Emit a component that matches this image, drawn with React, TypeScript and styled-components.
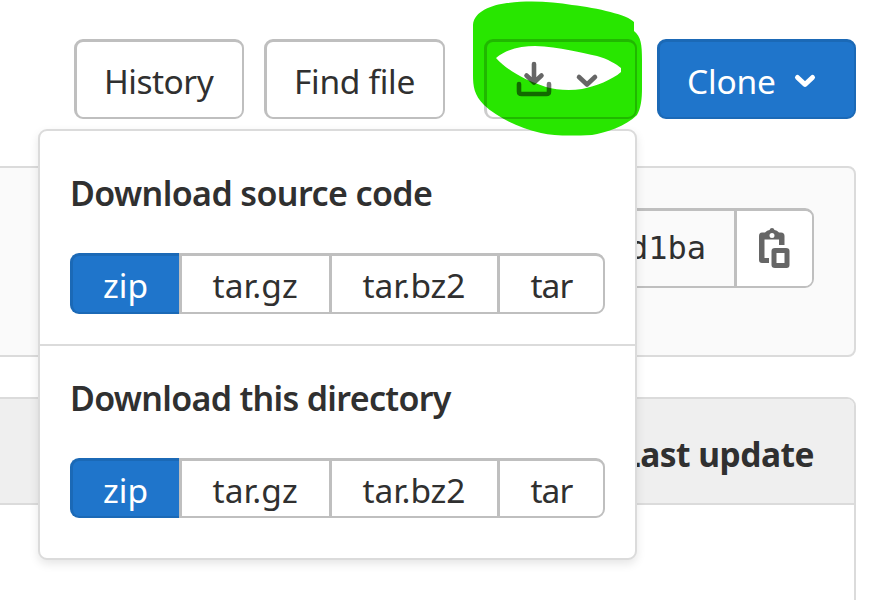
import React from "react";
import styled, { createGlobalStyle, css } from "styled-components";

const Global = createGlobalStyle`
  * { box-sizing: border-box; }
  body { margin: 0; background: #fff; overflow: hidden; }
`;

const Page = styled.main`
  position: relative;
  width: 895px;
  height: 600px;
  overflow: hidden;
  background: #fff;
  color: #303030;
  font-family: "Noto Sans", "Open Sans", sans-serif;
  font-size: 33.5px;
`;

const Toolbar = styled.header`
  display: flex;
  gap: 20px;
  padding: 39px 0 0 74px;
`;

const Label = styled.span<{ $track?: number }>`
  display: block;
  white-space: nowrap;
  line-height: 40px;
  letter-spacing: ${(p) => p.$track ?? 0}px;
`;

const Button = styled.button<{ $width: number; $primary?: boolean }>`
  display: flex;
  align-items: center;
  width: ${(p) => p.$width}px;
  height: 80px;
  padding: 3px 0 0 27px;
  border: solid #bfbfbf;
  border-width: 3px 2px 2px 3px;
  border-radius: 9px;
  background: #fff;
  color: inherit;
  font: inherit;
  ${(p) =>
    p.$primary &&
    css`
      border-color: #1b69b6;
      background: #1f75cb;
      color: #fff;
    `}
`;

const DownloadButton = styled(Button)`
  position: relative;
  z-index: 3;
  margin-left: 19px;
  padding: 0 0 1px 28px;
  gap: 22px;
  border-color: rgba(0, 0, 0, 0.2);
  background: transparent;
`;

const Icon = styled.svg`
  display: block;
  flex: none;
  fill: none;
  stroke: currentColor;
  stroke-linecap: round;
  stroke-linejoin: round;
`;

const DownloadChevron = styled(Icon)`
  margin-top: 3px;
`;

const CloneChevron = styled(Icon)`
  margin: 0 0 1px 17px;
`;

const CommitCard = styled.section`
  width: 876px;
  height: 191px;
  margin: 47px 0 0 -20px;
  padding: 40px 40px 0 0;
  border: 2px solid #dbdbdb;
  border-radius: 8px;
  background: #fafafa;
  display: flex;
  justify-content: flex-end;
`;

const ShaGroup = styled.div`
  display: flex;
  width: 260px;
  height: 80px;
  border: solid #bfbfbf;
  border-width: 3px 2px 2px 3px;
  border-radius: 9px;
  overflow: hidden;
`;

const Sha = styled.code`
  flex: 1;
  padding-right: 28px;
  text-align: right;
  font: 32px/74px "DejaVu Sans Mono", monospace;
`;

const CopyButton = styled.button`
  width: 78px;
  padding: 0 0 2px 22px;
  border: 0;
  border-left: 3px solid #bfbfbf;
  background: #fff;
  color: #666;
`;

const FileTable = styled.section`
  width: 876px;
  height: 240px;
  margin: 40px 0 0 -20px;
  border: 2px solid #dbdbdb;
  border-radius: 9px;
  overflow: hidden;
`;

const TableHead = styled.div`
  display: flex;
  justify-content: flex-end;
  align-items: center;
  height: 106px;
  padding: 5px 40px 0 0;
  border-bottom: 2px solid #dbdbdb;
  background: #efefef;
  font-weight: 700;
`;

const Menu = styled.div`
  position: absolute;
  z-index: 1;
  left: 38px;
  top: 129px;
  width: 599px;
  height: 431px;
  border: 2px solid #dbdbdb;
  border-radius: 9px;
  background: #fff;
  box-shadow: 0 4px 10px rgba(0, 0, 0, 0.1);
`;

const MenuSection = styled.section<{ $first?: boolean }>`
  height: ${(p) => (p.$first ? 215 : 212)}px;
  padding: ${(p) => (p.$first ? 42 : 32)}px 30px 0;
  ${(p) => p.$first && "border-bottom: 2px solid #dbdbdb;"}
`;

const Heading = styled.h2`
  margin: 0;
  font-size: 34px;
  font-weight: 600;
`;

const Formats = styled.div<{ $height: number }>`
  display: flex;
  width: 535px;
  height: ${(p) => p.$height}px;
  margin-top: 40px;
`;

const Format = styled.button<{ $width: number; $active?: boolean }>`
  width: ${(p) => p.$width}px;
  padding: 2px 0 0 30.5px;
  border: solid #bfbfbf;
  border-width: 3px 0 2px 3px;
  background: #fff;
  color: inherit;
  font: inherit;
  text-align: left;
  &:last-child {
    border-right-width: 2px;
    border-radius: 0 9px 9px 0;
  }
  ${(p) =>
    p.$active &&
    css`
      padding-left: 30px;
      border-color: #1b69b6;
      border-radius: 9px 0 0 9px;
      background: #1f75cb;
      color: #fff;
    `}
`;

const Highlight = styled.svg`
  position: absolute;
  z-index: 2;
  left: 465px;
  top: 0;
  pointer-events: none;
`;

const formats = [
  { name: "zip", width: 109, track: 0 },
  { name: "tar.gz", width: 150, track: 0.1 },
  { name: "tar.bz2", width: 168, track: -0.1 },
  { name: "tar", width: 108, track: -1 },
];

function FormatRow({ height }: { height: number }) {
  return (
    <Formats $height={height}>
      {formats.map((f, i) => (
        <Format key={f.name} $width={f.width} $active={i === 0}>
          <Label $track={f.track}>{f.name}</Label>
        </Format>
      ))}
    </Formats>
  );
}

export default function App() {
  return (
    <Page>
      <Global />
      <Toolbar>
        <Button $width={170}><Label $track={-0.5}>History</Label></Button>
        <Button $width={181}><Label $track={-0.3}>Find file</Label></Button>
        <DownloadButton $width={153} aria-label="Download">
          <Icon width="38" height="38" viewBox="0 0 38 38" strokeWidth="4.6">
            <path stroke="rgba(0,0,0,.6)" d="M19 4V22M11.5 15.5L19 22.5L26.5 15.5" />
            <path stroke="rgba(0,0,0,.54)" d="M4 24V31.5Q4 34 6.5 34H31.5Q34 34 34 31.5V24" />
          </Icon>
          <DownloadChevron width="24" height="16" viewBox="0 0 24 16" strokeWidth="4.6">
            <path stroke="rgba(0,0,0,.6)" d="M4 4L12 11.5L20 4" />
          </DownloadChevron>
        </DownloadButton>
        <Button $width={199} $primary>
          <Label $track={-0.2}>Clone</Label>
          <CloneChevron width="24" height="16" viewBox="0 0 24 16" strokeWidth="5">
            <path d="M4.5 4.5L12 11.5L19.5 4.5" />
          </CloneChevron>
        </Button>
      </Toolbar>
      <CommitCard>
        <ShaGroup>
          <Sha>d1ba</Sha>
          <CopyButton aria-label="Copy commit SHA">
            <Icon width="31" height="40" viewBox="0 0 31 40" strokeWidth="0">
              <path fill="currentColor" fillRule="evenodd" d="M3 4.5H6Q8 2 10.500 2Q11 0 13 0Q15 0 15.500 2Q18 2 20 4.500H22Q25.500 4.500 25.500 8V17H20V11.500H5.500V30H10V35H3Q0 35 0 32V8Q0 4.500 3 4.500ZM13 5A2.500 2.500 0 1 0 13 10A2.500 2.500 0 1 0 13 5ZM16 20H27Q30.500 20 30.500 23V37Q30.500 40 27.500 40H16Q12.500 40 12.500 37V23Q12.500 20 16 20ZM17.500 25V35H25.500V25Z" />
            </Icon>
          </CopyButton>
        </ShaGroup>
      </CommitCard>
      <FileTable>
        <TableHead><Label $track={-0.5}>Last update</Label></TableHead>
      </FileTable>
      <Menu>
        <MenuSection $first>
          <Heading><Label $track={-0.6}>Download source code</Label></Heading>
          <FormatRow height={61} />
        </MenuSection>
        <MenuSection>
          <Heading><Label $track={-0.69}>Download this directory</Label></Heading>
          <FormatRow height={60} />
        </MenuSection>
      </Menu>
      <Highlight width="180" height="140" viewBox="465 0 180 140" aria-hidden="true">
        <path fill="#28e600" fillRule="evenodd" d="M473 25C474 11 492 5 507 3C532 0 553 2 572 5C598 8 628 15 634 22V31C641 37 642 44 642 60V88C642 99 641 108 637 115C626 126 605 133 592 135C571 136 554 136 541 133C518 128 497 117 484 105C474 95 473 86 473 75ZM496 58C506 49 522 46 535 46C560 47 582 53 597 56C608 59 616 64 621 68V72C612 80 596 86 582 89C570 91 556 90 546 87C524 80 507 70 496 58Z" />
      </Highlight>
    </Page>
  );
}
